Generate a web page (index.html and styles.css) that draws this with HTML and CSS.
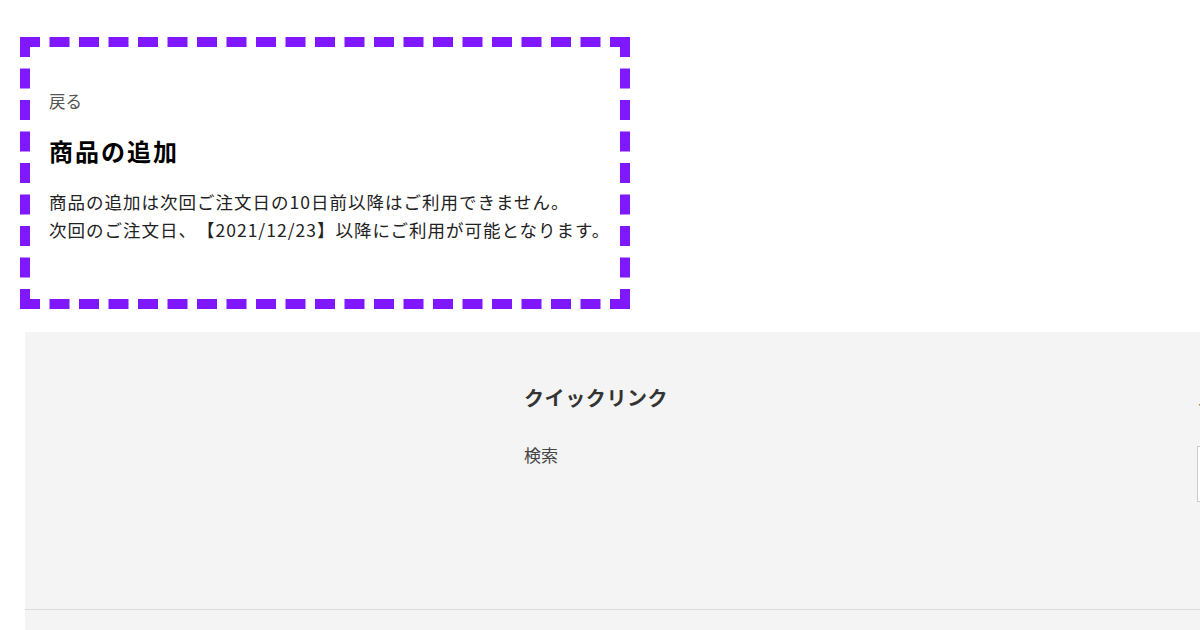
FILE: index.html
```html
<!DOCTYPE html>
<html lang="ja">
<head>
    <meta charset="UTF-8">
    <meta name="viewport" content="width=device-width, initial-scale=1.0">
    <title>商品の追加</title>
    <link rel="stylesheet" href="styles.css">
</head>
<body>

<main class="page">
    <section class="notice">
        <a class="back-link" href="#">戻る</a>
        <h2>商品の追加</h2>
        <p>商品の追加は次回ご注文日の10日前以降はご利用できません。<br>次回のご注文日、【2021/12/23】以降にご利用が可能となります。</p>
    </section>
</main>

<footer class="footer">
    <div class="footer-main">
        <div class="footer-col footer-brand"></div>
        <div class="footer-col">
            <h3>クイックリンク</h3>
            <ul class="footer-links">
                <li><a href="#">検索</a></li>
            </ul>
        </div>
        <div class="footer-col">
            <h3>メールマガジン</h3>
            <input type="email" class="footer-input" placeholder="">
        </div>
    </div>
    <div class="footer-bottom"></div>
</footer>

</body>
</html>
```

FILE: styles.css
```css
* {
    margin: 0;
    padding: 0;
    box-sizing: border-box;
}

html, body {
    overflow: hidden;
}

body {
    font-family: "Noto Sans CJK JP", "Noto Sans", sans-serif;
    color: #222;
    background-color: #fff;
    width: 1200px;
    text-spacing-trim: space-all;
}

.page {
    padding: 37px 0 23px 20px;
}

.notice {
    width: 610px;
    border: 10px dashed #7f18fe;
    padding: 40px 0 55px 19px;
}

.back-link {
    display: block;
    font-size: 16.5px;
    line-height: 28px;
    color: #555;
    text-decoration: none;
}

.notice h2 {
    margin-top: 18px;
    font-size: 24px;
    line-height: 36px;
    font-weight: 700;
    letter-spacing: 2px;
    color: #000;
}

.notice p {
    margin-top: 19px;
    font-size: 17.5px;
    line-height: 28px;
    letter-spacing: 1px;
    white-space: nowrap;
    color: #222;
}

.footer {
    margin-left: 25px;
    width: 1200px;
    background-color: #f4f4f4;
}

.footer-main {
    display: grid;
    grid-template-columns: 451px 649px 300px;
    column-gap: 24px;
    padding: 51px 0 0 24px;
    height: 278px;
    border-bottom: 1px solid #dcdcdc;
}

.footer-col h3 {
    font-size: 20px;
    line-height: 30px;
    font-weight: 700;
    letter-spacing: 0.6px;
    color: #333;
    white-space: nowrap;
}

.footer-links {
    list-style: none;
    margin-top: 28px;
}

.footer-links a {
    font-size: 17px;
    line-height: 28px;
    color: #444;
    text-decoration: none;
}

.footer-input {
    display: block;
    margin-top: 33px;
    width: 280px;
    height: 56px;
    border: 1px solid #ccc;
    background-color: #fff;
}

.footer-bottom {
    height: 40px;
}
```
